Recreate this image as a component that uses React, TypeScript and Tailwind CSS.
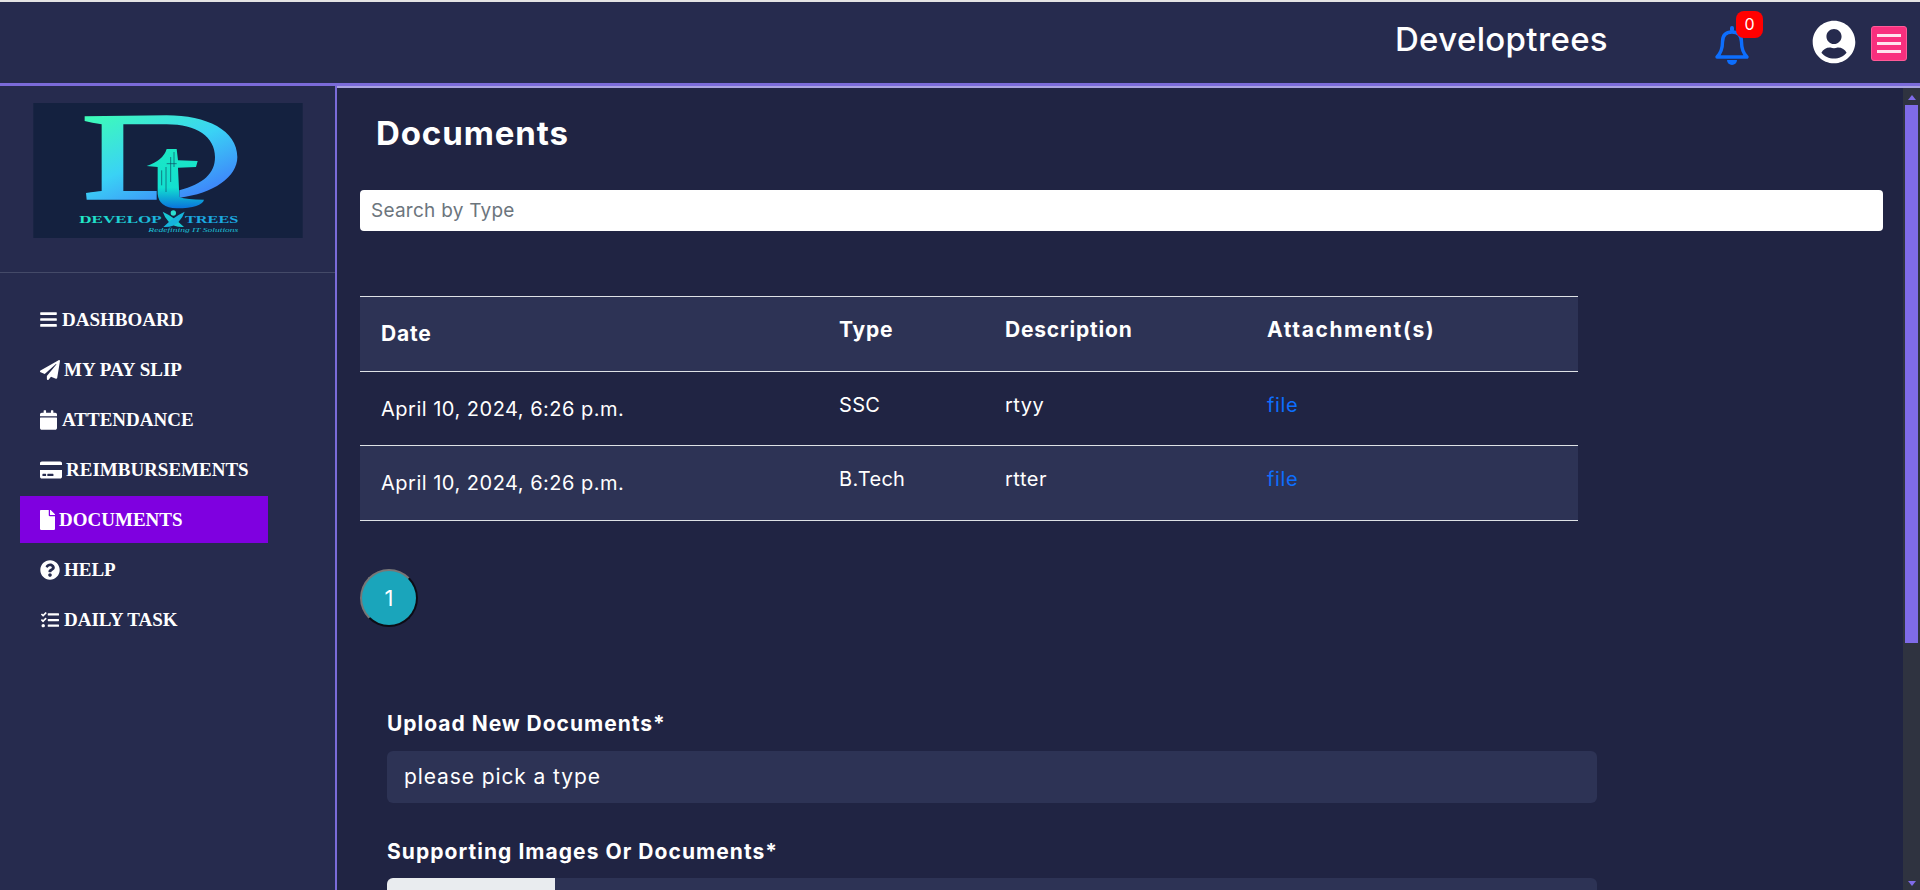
import React from "react";
import { FaBars, FaPaperPlane, FaCalendar, FaCreditCard, FaFile, FaQuestionCircle, FaTasks, FaUserCircle } from "react-icons/fa";

function Logo() {
  return (
    <svg viewBox="100 308 808 405" className="block w-[270px] h-[135px]">
      <defs>
        <linearGradient id="dg" x1="0.05" y1="0" x2="0.85" y2="1">
          <stop offset="0" stopColor="#3dfcb8" />
          <stop offset="0.5" stopColor="#3ad2f5" />
          <stop offset="1" stopColor="#3f78fb" />
        </linearGradient>
        <linearGradient id="tg" x1="0" y1="0" x2="0" y2="1">
          <stop offset="0" stopColor="#1ce8c4" />
          <stop offset="0.65" stopColor="#12e0d0" />
          <stop offset="1" stopColor="#0a72dc" />
        </linearGradient>
        <linearGradient id="wg" x1="0" y1="0" x2="1" y2="0">
          <stop offset="0" stopColor="#22ecc4" />
          <stop offset="1" stopColor="#1ab0e0" />
        </linearGradient>
      </defs>
      <rect x="100" y="308" width="808" height="405" fill="#14213f" />
      <path d="M254 348 L500 345 C620 345 712 390 712 470 C712 530 640 580 538 592 L538 570 C610 550 645 520 645 470 C645 410 590 372 500 372 L370 372 L370 572 L470 572 L470 598 L260 598 L258 578 Q290 574 305 572 L305 372 Q275 368 254 362 Z" fill="url(#dg)" />
      <path d="M440 497 Q490 480 500 446 L530 446 L534 480 L593 482 L588 500 L534 502 L538 590 Q560 598 612 598 Q606 622 530 624 Q476 622 473 580 L473 500 Z" fill="url(#tg)" />
      <path d="M485 510 V555 M498 500 V575 M512 470 V545 M522 455 V500 M500 490 H530" stroke="#0d4a63" strokeWidth="2" fill="none" />
      <text x="238" y="667" fontFamily="'Liberation Serif', serif" fontSize="32" fontWeight="700" textLength="247" lengthAdjust="spacingAndGlyphs" fill="url(#wg)">DEVELOP</text>
      <text x="555" y="667" fontFamily="'Liberation Serif', serif" fontSize="32" fontWeight="700" textLength="160" lengthAdjust="spacingAndGlyphs" fill="#1ba8e0">TREES</text>
      <text x="445" y="694" fontFamily="'Liberation Serif', serif" fontSize="19" fontStyle="italic" textLength="270" lengthAdjust="spacingAndGlyphs" fill="#1cc0d8">Redefining IT Solutions</text>
      <circle cx="520" cy="638" r="8" fill="#2ce0d0" />
      <path d="M488 634 Q522 650 552 680 Q522 682 506 664 Q494 652 488 634 Z" fill="#18c8d2" />
      <path d="M554 634 Q520 650 490 680 Q520 682 536 664 Q548 652 554 634 Z" fill="#16b4dc" />
    </svg>
  );
}

const items = [
  { label: "DASHBOARD", Icon: FaBars, w: "w-[17px] h-[19px]", gap: "ml-[5px]" },
  { label: "MY PAY SLIP", Icon: FaPaperPlane, w: "w-[20px] h-[20px]", gap: "ml-[4px]" },
  { label: "ATTENDANCE", Icon: FaCalendar, w: "w-[17px] h-[20px]", gap: "ml-[5px]" },
  { label: "REIMBURSEMENTS", Icon: FaCreditCard, w: "w-[22px] h-[20px]", gap: "ml-[4px]" },
  { label: "DOCUMENTS", Icon: FaFile, w: "w-[15px] h-[20px]", gap: "ml-[4px]", active: true },
  { label: "HELP", Icon: FaQuestionCircle, w: "w-[20px] h-[20px]", gap: "ml-[4px]" },
  { label: "DAILY TASK", Icon: FaTasks, w: "w-[20px] h-[18px]", gap: "ml-[4px]" },
];

function Sidebar() {
  return (
    <aside className="w-[337px] shrink-0 bg-[#262b4e] border-r-2 border-[#7b6bd9] flex flex-col">
      <div className="ml-[33px] mt-[17px]"><Logo /></div>
      <div className="mt-[34px] h-px bg-[#444a68]" />
      <nav className="mt-[23px] flex flex-col gap-[3px]">
        {items.map(({ label, Icon, w, gap, active }) => (
          <div
            key={label}
            className={`ml-5 w-[248px] h-[47px] pl-5 flex items-center text-white font-bold text-[19px] font-['Liberation_Serif',serif] ${active ? "bg-[#7f00e0]" : ""}`}
          >
            <Icon className={w} />
            <span className={`${gap} mt-[2px]`}>{label}</span>
          </div>
        ))}
      </nav>
    </aside>
  );
}

function Bell() {
  return (
    <svg viewBox="0 0 36 40" className="w-[36px] h-[40px]">
      <path d="M3 32 C8 27 8.5 22 8.5 17 C8.5 10 12 7 18 7 C24 7 27.5 10 27.5 17 C27.5 22 28 27 33 32 Z" fill="none" stroke="#0d6efd" strokeWidth="3.4" strokeLinejoin="round" />
      <rect x="16" y="1" width="4" height="6" rx="2" fill="#0d6efd" />
      <path d="M13 35 H23 A5 5 0 0 1 13 35 Z" fill="#0d6efd" />
    </svg>
  );
}

function Header() {
  return (
    <header className="h-[84px] shrink-0 bg-[#262b4e] border-b-[3px] border-[#7b6bd9] flex items-center justify-end">
      <span className="text-white text-[33px] font-medium tracking-[0.35px] mr-[106px] -mt-[5px] font-['Inter',sans-serif]">Developtrees</span>
      <div className="relative w-[36px] h-[40px] mr-[62px] mt-[4px]">
        <Bell />
        <span className="absolute -top-[14px] left-[22px] w-[27px] h-[27px] rounded-[8px] bg-[#ff0000] text-white text-[16px] flex items-center justify-center font-['Inter',sans-serif]">0</span>
      </div>
      <FaUserCircle className="w-[44px] h-[44px] text-white mr-[15px] mt-[-2px]" />
      <div className="w-[36px] h-[35px] mr-[13px] mt-[2px] rounded-[3px] bg-[#f92f7e] border border-[#ff5a98] flex flex-col justify-center gap-[5px] px-[5px]">
        <span className="h-[3px] bg-[#ffe3ee]" />
        <span className="h-[3px] bg-[#ffe3ee]" />
        <span className="h-[3px] bg-[#ffe3ee]" />
      </div>
    </header>
  );
}

const rows = [
  { type: "SSC", desc: "rtyy", bg: "" },
  { type: "B.Tech", desc: "rtter", bg: "bg-[#2d3355]" },
];

function DocTable() {
  return (
    <table className="mt-[65px] w-[1218px] table-fixed border-collapse text-white font-['Inter',sans-serif]">
      <colgroup>
        <col className="w-[458px]" />
        <col className="w-[166px]" />
        <col className="w-[262px]" />
        <col className="w-[332px]" />
      </colgroup>
      <thead>
        <tr className="h-[75px] bg-[#2d3355] border-y border-[#dee2e6] text-[21px] font-bold text-left">
          <th className="pl-[21px] font-bold tracking-[0.8px]">Date</th>
          <th className="pl-[21px] pb-2 font-bold tracking-[0.8px]">Type</th>
          <th className="pl-[21px] pb-2 font-bold tracking-[0.8px]">Description</th>
          <th className="pl-[21px] pb-2 font-bold tracking-[1.6px]">Attachment(s)</th>
        </tr>
      </thead>
      <tbody>
        {rows.map((r, i) => (
          <tr key={r.type} className={`${i === 0 ? "h-[74px]" : "h-[75px]"} border-b border-[#dee2e6] ${r.bg}`}>
            <td className="pl-[21px] text-[20px] tracking-[0.5px]">April 10, 2024, 6:26 p.m.</td>
            <td className="pl-[21px] pb-[8px] text-[20px] tracking-[0.3px]">{r.type}</td>
            <td className="pl-[21px] pb-[8px] text-[20px] tracking-[0.5px]">{r.desc}</td>
            <td className="pl-[21px] pb-[8px] text-[20px] tracking-[0.6px] text-[#0d6efd]">file</td>
          </tr>
        ))}
      </tbody>
    </table>
  );
}

function Scrollbar() {
  return (
    <div className="w-[17px] shrink-0 bg-[#2f3340] flex flex-col items-center">
      <svg viewBox="0 0 8 5" className="w-[8px] h-[5px] mt-[7px] mb-[5px]"><path d="M4 0 L8 5 H0 Z" fill="#7f6be8" /></svg>
      <div className="w-[13px] h-[538px] bg-[#7f6be8]" />
      <svg viewBox="0 0 8 5" className="w-[8px] h-[5px] mt-auto mb-[4px]"><path d="M0 0 H8 L4 5 Z" fill="#7f6be8" /></svg>
    </div>
  );
}

function Main() {
  return (
    <div className="flex-1 min-w-0 flex border-t-2 border-[#a9a3e0]">
      <main className="flex-1 min-w-0 bg-[#202443] pl-[23px] pr-[20px] overflow-hidden">
        <h2 className="mt-[21px] ml-[16px] h-[48px] leading-[48px] text-white text-[33px] font-bold tracking-[0.9px] font-['Inter',sans-serif]">Documents</h2>
        <input
          placeholder="Search by Type"
          className="mt-[33px] block w-full h-[41px] bg-white rounded-[4px] px-[11px] text-[19px] tracking-[0.25px] placeholder:text-[#6c757d] font-['Inter',sans-serif]"
        />
        <DocTable />
        <button className="mt-[48px] block w-[58px] h-[58px] rounded-full bg-[#1aa5bb] text-white text-[22px] border-2 border-t-[#777777] border-l-[#777777] border-b-[#0c0c14] border-r-[#0c0c14] font-['Inter',sans-serif]">1</button>
        <div className="ml-[27px] w-[1210px] font-['Inter',sans-serif] text-white">
          <label className="mt-[82px] block h-[30px] leading-[30px] text-[21px] font-bold tracking-[0.98px]">Upload New Documents*</label>
          <div className="mt-[12px] h-[52px] rounded-[6px] bg-[#2d3355] pl-[17px] flex items-center text-[21px] tracking-[0.9px]">please pick a type</div>
          <label className="mt-[34px] block h-[30px] leading-[30px] text-[21px] font-bold tracking-[1.05px]">Supporting Images Or Documents*</label>
          <div className="mt-[11px] h-[52px] rounded-[6px] bg-[#2d3355] overflow-hidden flex">
            <div className="w-[168px] h-full bg-[#e9ecef]" />
          </div>
        </div>
      </main>
      <Scrollbar />
    </div>
  );
}

export default function App() {
  return (
    <div className="h-[890px] w-full overflow-hidden flex flex-col bg-[#202443]">
      <div className="h-[2px] shrink-0 bg-[#e4e4e4]" />
      <Header />
      <div className="flex-1 min-h-0 flex">
        <Sidebar />
        <Main />
      </div>
    </div>
  );
}
